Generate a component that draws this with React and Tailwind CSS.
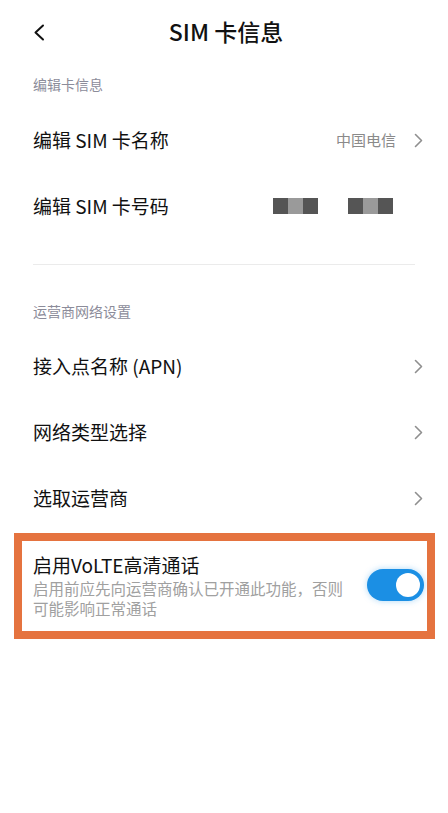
import React from 'react';

const FONT = { fontFamily: '"Noto Sans CJK SC", "Noto Sans", sans-serif' };

function Chevron({ className = '' }) {
  return (
    <svg width="9" height="15" viewBox="0 0 9 15" className={className} fill="none">
      <path d="M1.5 1.5 L7.5 7.5 L1.5 13.5" stroke="currentColor" strokeWidth="1.6" strokeLinecap="round" strokeLinejoin="round" />
    </svg>
  );
}

function Masked() {
  return (
    <div className="flex h-4 w-[45px]">
      <div className="flex-1 bg-[#555]" />
      <div className="flex-1 bg-[#9a9a9a]" />
      <div className="flex-1 bg-[#555]" />
    </div>
  );
}

function Row({ label, value, arrow = true, right }) {
  return (
    <div className="flex h-[66px] items-center justify-between pl-[33px] pr-[25px]">
      <span className="text-[19px] text-[#111]">{label}</span>
      <div className="flex items-center gap-[18px] text-[#8a8a8a]">
        {value && <span className="text-[15px]">{value}</span>}
        {right}
        {arrow && <Chevron className="text-[#8f8f8f]" />}
      </div>
    </div>
  );
}

function SectionLabel({ children }) {
  return <div className="pl-[33px] text-[14px] leading-5 text-[#8c8c9a]">{children}</div>;
}

export default function App() {
  return (
    <div className="min-h-[813px] w-full bg-white" style={FONT}>
      {/* 顶栏 */}
      <div className="relative flex h-[62px] items-center justify-center">
        <button className="absolute left-[33px] top-[24px] text-[#111]">
          <svg width="12" height="17" viewBox="0 0 12 17" fill="none">
            <path d="M10 1.5 L2.5 8.5 L10 15.5" stroke="currentColor" strokeWidth="2" strokeLinecap="round" strokeLinejoin="round" />
          </svg>
        </button>
        <h1 className="ml-1 text-[23px] font-medium text-[#111]">SIM 卡信息</h1>
      </div>

      <div className="pt-3">
        <SectionLabel>编辑卡信息</SectionLabel>
      </div>
      <div className="mt-[13px]">
        <Row label="编辑 SIM 卡名称" value="中国电信" />
        <Row
          label="编辑 SIM 卡号码"
          arrow={false}
          right={
            <div className="mr-[30px] flex gap-[30px]">
              <Masked />
              <Masked />
            </div>
          }
        />
      </div>

      <div className="mx-[33px] mt-[25px] h-px bg-[#ebebeb]" />

      <div className="mt-9">
        <SectionLabel>运营商网络设置</SectionLabel>
      </div>
      <div className="mt-3">
        <Row label="接入点名称 (APN)" />
        <Row label="网络类型选择" />
        <Row label="选取运营商" />
      </div>

      {/* VoLTE 开关（橙色标注框） */}
      <div className="ml-[14px] mr-[13px] mt-[2px] border-[8px] border-[#e5733f]">
        <div className="flex items-center justify-between pb-[13px] pl-[11px] pr-[3px] pt-[11px]">
          <div>
            <div className="text-[19px] leading-[26px] text-[#111]">启用VoLTE高清通话</div>
            <div className="whitespace-nowrap text-[15.5px] leading-5 text-[#a0a0a0]">
              <div>启用前应先向运营商确认已开通此功能，否则</div>
              <div>可能影响正常通话</div>
            </div>
          </div>
          <div className="flex h-8 w-[57px] items-center justify-end rounded-full bg-[#1b8fe4] pr-1 shadow-[0_0_6px_rgba(27,143,228,0.35)]">
            <div className="h-6 w-6 rounded-full bg-white" />
          </div>
        </div>
      </div>
    </div>
  );
}
